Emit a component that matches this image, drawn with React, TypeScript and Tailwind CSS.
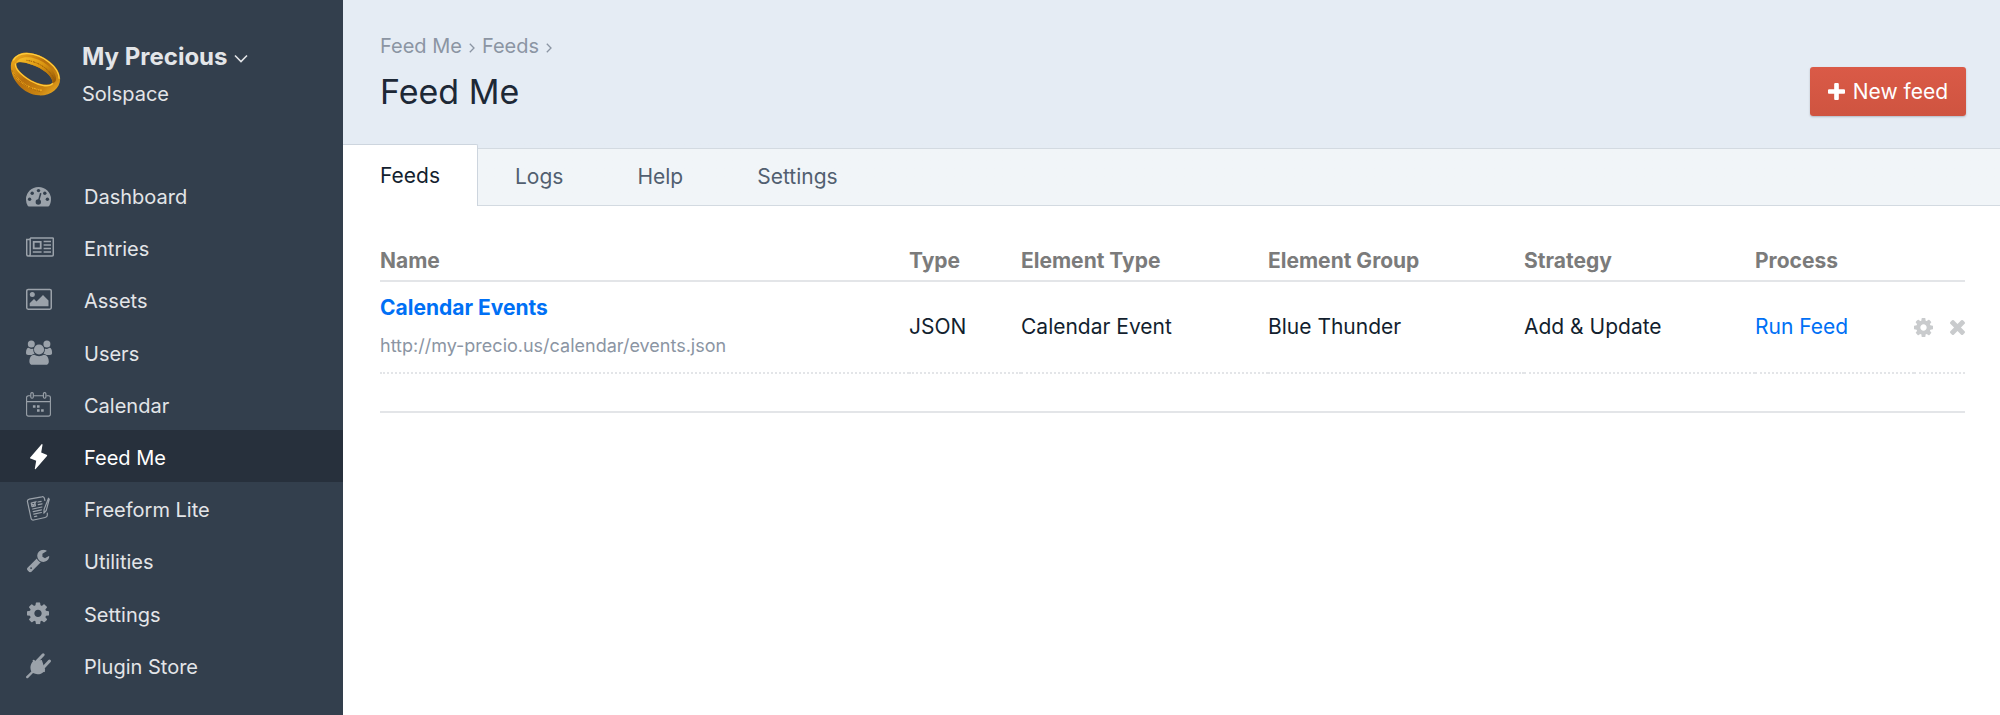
import type { ReactNode } from "react";

const COG =
  "M1152 896q0-106-75-181t-181-75-181 75-75 181 75 181 181 75 181-75 75-181zm512-109v222q0 12-8 23t-20 13l-185 28q-19 54-39 91 35 50 107 138 10 12 10 25t-9 23q-27 37-99 108t-94 71q-12 0-26-9l-138-108q-44 23-91 38-16 136-29 186-7 28-36 28h-222q-14 0-24.5-8.5t-11.5-21.5l-28-184q-49-16-90-37l-141 107q-10 9-25 9-14 0-25-11-126-114-165-168-7-10-7-23 0-12 8-23 15-21 51-66.5t54-70.5q-27-50-41-99l-183-27q-13-2-21-12.5t-8-23.5v-222q0-12 8-23t19-13l186-28q14-46 39-92-40-57-107-138-10-12-10-24 0-10 9-23 26-36 98.5-107.5t94.5-71.5q13 0 26 10l138 107q44-23 91-38 16-136 29-186 7-28 36-28h222q14 0 24.5 8.5t11.5 21.5l28 184q49 16 90 37l142-107q9-9 24-9 13 0 25 10 129 119 165 170 7 8 7 22 0 12-8 23-15 21-51 66.5t-54 70.5q26 50 41 98l183 28q13 2 21 12.5t8 23.5z";
const WRENCH =
  "M448 1472q0-26-19-45t-45-19-45 19-19 45 19 45 45 19 45-19 19-45zm644-420l-682 682q-37 37-90 37-52 0-91-37l-106-108q-38-36-38-90 0-53 38-91l681-681q39 98 114.5 173.5t173.5 114.5zm634-435q0 39-23 106-47 134-164.5 217.5t-258.5 83.5q-185 0-316.5-131.5t-131.5-316.5 131.5-316.5 316.5-131.5q58 0 121.5 16.5t107.5 46.5q16 11 16 28t-16 28l-293 169v224l193 107q5-3 79-48.5t135.5-81 70.5-35.5q15 0 23.5 10t8.5 25z";
const TIMES =
  "M1490 1322q0 40-28 68l-136 136q-28 28-68 28t-68-28l-294-294-294 294q-28 28-68 28t-68-28l-136-136q-28-28-28-68t28-68l294-294-294-294q-28-28-28-68t28-68l136-136q28-28 68-28t68 28l294 294 294-294q28-28 68-28t68 28l136 136q28 28 28 68t-28 68l-294 294 294 294q28 28 28 68z";
const PLUS =
  "M1600 736v192q0 40-28 68t-68 28h-416v416q0 40-28 68t-68 28h-192q-40 0-68-28t-28-68v-416h-416q-40 0-68-28t-28-68v-192q0-40 28-68t68-28h416v-416q0-40 28-68t68-28h192q40 0 68 28t28 68v416h416q40 0 68 28t28 68z";

const HOLE = "#333f4d";

const icons: Record<string, ReactNode> = {
  gauge: (
    <>
      <path d="M0 18.200a12.500 12.200 0 0 1 25 0c0 2.400-.6 4.600-1.700 6.500-.3.500-.7.800-1.200.8H2.900c-.5 0-.9-.3-1.200-.8A12.500 12.500 0 0 1 0 18.200z" />
      <g fill={HOLE}>
        <circle cx="3.6" cy="18.3" r="1.7" />
        <circle cx="6.2" cy="12.2" r="1.7" />
        <circle cx="12.5" cy="9.6" r="1.7" />
        <circle cx="18.8" cy="12.2" r="1.7" />
        <circle cx="21.4" cy="18.3" r="1.7" />
        <circle cx="12.3" cy="21" r="2.7" />
      </g>
      <path d="M12.400 20.500L14.600 12.800" stroke={HOLE} strokeWidth="1.5" strokeLinecap="round" />
    </>
  ),
  newspaper: (
    <g fill="none" stroke="currentColor" strokeWidth="1.5">
      <path d="M4.200 4.900h22.400c.4 0 .7.3.7.7v15.900c0 .9-.7 1.600-1.600 1.600H2.600c-1.100 0-1.900-.8-1.900-1.900V6.500h3.500M4.200 4.900v16.300c0 1.100-.8 1.900-1.700 1.900" />
      <path d="M7.700 8.900h7v6.400h-7z" strokeWidth="1.8" />
      <path d="M6.800 19h8.800M17.600 8.500h7.400M17.600 12h7.400M17.600 15.500h7.400M17.600 19h7.400" />
    </g>
  ),
  image: (
    <>
      <rect x=".75" y="4.45" width="24.5" height="19.8" rx="1.4" fill="none" stroke="currentColor" strokeWidth="1.5" />
      <circle cx="6.3" cy="9.6" r="2.5" />
      <path d="M3.700 21.300v-3l4.300-4.200 2.500 2.400 6.500-6.500 5.500 5.500v5.800z" />
    </>
  ),
  users: (
    <>
      <circle cx="5.3" cy="6" r="3.5" />
      <circle cx="20.9" cy="6" r="3.5" />
      <path d="M2.700 9.700c-1.800 0-2.700 2-2.700 5.300 0 1.300.8 2 2.100 2h3.500c.9-.8 1.900-1.200 3-1.300-1-1.300-1.500-2.900-1.300-4.900-1.700.4-3.200 0-4.600-1.100zM23.400 9.700c1.800 0 2.700 2 2.700 5.300 0 1.300-.8 2-2.100 2h-3.500c-.9-.8-1.900-1.200-3-1.300 1-1.300 1.500-2.900 1.300-4.900 1.700.4 3.200 0 4.600-1.100z" />
      <circle cx="13.05" cy="11.5" r="5.1" />
      <path d="M8.300 16.700c2.800 1.900 6.700 1.900 9.500 0 3.400.1 5 3.200 5 7 0 2-1.200 3.100-3.100 3.100H6.500c-1.900 0-3.100-1.100-3.100-3.100 0-3.800 1.500-6.900 4.900-7z" />
    </>
  ),
  calendar: (
    <>
      <g fill="none" stroke="currentColor" strokeWidth="1.1">
        <path d="M4.700 5.700H2.600C1.400 5.700.6 6.500.6 7.600v16.600c0 1.100.8 1.900 2 1.900h19.800c1.200 0 2-.8 2-1.900V7.600c0-1.100-.8-1.900-2-1.900h-2M7.500 5.700h9.700M.6 11.600h23.800" />
        <rect x="4.8" y="2.6" width="2.5" height="5.6" rx="1.2" />
        <rect x="17.4" y="2.6" width="2.5" height="5.6" rx="1.2" />
      </g>
      <path d="M6.900 15.300h2.600v2.400H6.900zM11 15.300h2.600v2.400H11zM11 19.300h2.600v2.400H11zM15.100 19.300h2.600v2.400h-2.600z" />
    </>
  ),
  bolt: <path d="M15.600 2.300L4.200 15.400c-.4.500-.2 1 .4 1.200l5.600 2.100-1.400 8.100c0 .5.500.6.900.2L21 13.900c.4-.5.200-.9-.4-1.200L15.200 10.600l1.300-7.700c.1-.7-.4-1.100-.9-.6z" />,
  form: (
    <g fill="none" stroke="currentColor" strokeWidth="1.2" strokeLinecap="round" strokeLinejoin="round">
      <path d="M18.900 6.500l-.5-2.100c-.3-1.300-1.300-1.900-2.600-1.600L3.300 5.200C1.900 5.500 1.200 6.500 1.500 7.900l3.600 16.400c.3 1.400 1.300 2 2.600 1.700l11.400-2.500c1.300-.3 2.200-1 2.200-2.300v-2" />
      <path d="M22.500 4.200l-4.400 11.200-.2 3.700 2.300-2.600L23.300 5M5.200 9l3.500-.8.8 3.600-3.500.8zM6.400 10.300l1.200 1 2.400-3.800M12 8l3.200-.7M12.300 10.600l3.800-.8M6.700 15l9.200-2M7.200 17.600l8.300-1.800M7.800 20.200l7.600-1.700M8.600 22.600l2.200-.5" />
    </g>
  ),
  wrench: (
    <svg x="1" y="3.5" width="22.5" height="23" viewBox="84 128 1650 1650">
      <path d={WRENCH} />
    </svg>
  ),
  cog: (
    <svg x="1" y="3.3" width="22" height="22" viewBox="128 128 1536 1536">
      <path d={COG} />
    </svg>
  ),
  plug: (
    <>
      <path d="M15.800 9.100L7.300 9.900C4.200 13 3.700 17.200 5.300 20.400L.4 25.200c-.6.600-.6 1.200 0 1.700.5.500 1.200.5 1.700 0l4.900-4.800c3.700 2 8.100 1.400 11-1.700l1.200-1.300z" />
      <path d="M7.600 9.700L18 20.100" stroke="currentColor" strokeWidth="2" strokeLinecap="round" />
      <path d="M11.200 10L17.200 3.800M17.700 16.200L23.500 10" stroke="currentColor" strokeWidth="3" strokeLinecap="round" />
    </>
  ),
};

const nav = [
  { label: "Dashboard", icon: "gauge" },
  { label: "Entries", icon: "newspaper" },
  { label: "Assets", icon: "image" },
  { label: "Users", icon: "users" },
  { label: "Calendar", icon: "calendar" },
  { label: "Feed Me", icon: "bolt", active: true },
  { label: "Freeform Lite", icon: "form" },
  { label: "Utilities", icon: "wrench" },
  { label: "Settings", icon: "cog" },
  { label: "Plugin Store", icon: "plug" },
];

function RingLogo() {
  return (
    <svg viewBox="30 64 158 138" className="h-[46px] w-[53px] shrink-0" aria-hidden="true">
      <defs>
        <linearGradient id="band" x1="0" y1="0" x2="1" y2="1">
          <stop offset="0" stopColor="#f6b41f" />
          <stop offset=".45" stopColor="#b86f0c" />
          <stop offset=".75" stopColor="#c98310" />
          <stop offset="1" stopColor="#f2b62c" />
        </linearGradient>
        <linearGradient id="inner" x1="0" y1="0" x2="1" y2="1">
          <stop offset="0" stopColor="#f9c22c" />
          <stop offset=".5" stopColor="#d8930f" />
          <stop offset="1" stopColor="#8f5408" />
        </linearGradient>
      </defs>
      <path fill="url(#band)" fillRule="evenodd" d="M35 108C36 84 60 67 86 69c48 3 97 42 97 78 0 30-30 52-64 50-46-3-85-47-84-89zM51 103c0 16 22 35 46 49 24 13 50 17 63 8 2-14-18-36-50-50-29-12-54-16-59-7z" />
      <path fill="url(#inner)" d="M51 100c4-12 20-19 38-17 40 4 80 36 82 64 0 6-3 11-11 13 2-14-18-36-50-50-29-12-54-16-59-10z" />
      <path fill="none" stroke="#ffce3d" strokeWidth="4" d="M42 92c8-13 25-21 44-20 46 3 93 40 94 75" />
      <path fill="none" stroke="#ffc837" strokeWidth="4" d="M49 101c-3 17 20 37 46 53 25 14 54 20 66 7" />
      <path fill="none" stroke="#f0a91c" strokeWidth="5" strokeDasharray="3 2 6 3 2 3" d="M41 128c16 28 50 51 90 54" />
      <path fill="none" stroke="#8a4f06" strokeWidth="2" strokeDasharray="4 4 2 3" d="M38 122c14 29 48 56 88 64" />
      <path fill="none" stroke="#9a5a08" strokeWidth="3" strokeDasharray="3 3 6 2" d="M82 92c36 4 70 27 84 58" />
    </svg>
  );
}

function Sidebar() {
  return (
    <aside className="w-[343px] shrink-0 bg-[#333f4d] text-[#e3e5e8]">
      <div className="flex h-[169px] items-start gap-5 pl-[9px] pt-[41px]">
        <div className="pt-[10px]">
          <RingLogo />
        </div>
        <div>
          <button type="button" className="flex items-center gap-[6px] text-[24px] leading-8 font-bold">
            My Precious
            <svg viewBox="0 0 14 10" className="mt-1 h-[10px] w-[14px]" fill="none" stroke="currentColor" strokeWidth="1.6" aria-hidden="true">
              <path d="M1 1.500l6 6 6-6" />
            </svg>
          </button>
          <p className="mt-[5px] leading-8">Solspace</p>
        </div>
      </div>
      <nav aria-label="Main">
        <ul className="grid h-[522px] auto-rows-fr">
          {nav.map((item) => (
            <li key={item.label}>
              <a
                href="#"
                aria-current={item.active ? "page" : undefined}
                className={
                  item.active
                    ? "flex h-full items-center gap-[30px] bg-[#27303c] pl-[26px] text-white"
                    : "flex h-full items-center gap-[30px] pl-[26px]"
                }
              >
                <svg
                  viewBox="0 0 28 28"
                  className={item.active ? "size-7 shrink-0 text-white" : "size-7 shrink-0 text-[#9ba2aa]"}
                  fill="currentColor"
                  aria-hidden="true"
                >
                  {icons[item.icon]}
                </svg>
                <span className="pt-1">{item.label}</span>
              </a>
            </li>
          ))}
        </ul>
      </nav>
    </aside>
  );
}

function Chevron() {
  return (
    <svg viewBox="0 0 6 10" className="mt-1 h-[10px] w-[6px]" fill="none" stroke="currentColor" strokeWidth="1.3" aria-hidden="true">
      <path d="M.8.700L5 5 .8 9.300" />
    </svg>
  );
}

const tabClass = "flex h-[56px] items-center px-[37px] text-[#515f70]";
const columns = ["Name", "Type", "Element Type", "Element Group", "Strategy", "Process"];

export default function App() {
  return (
    <div className="flex min-h-screen bg-white font-['Inter','Liberation_Sans',sans-serif] text-[20px] text-[#131f2f]">
      <Sidebar />
      <div className="min-w-0 flex-1">
        <header className="bg-[#e5ecf4]">
          <div className="flex items-start justify-between pr-[34px] pl-[37px]">
            <div className="pt-8">
              <nav aria-label="Breadcrumb" className="flex items-center gap-[7px] leading-7 text-[#8b95a3]">
                <a href="#">Feed Me</a>
                <Chevron />
                <a href="#">Feeds</a>
                <Chevron />
              </nav>
              <h1 className="mt-2 text-[34px] leading-[48px] text-[#1d2836]">Feed Me</h1>
            </div>
            <button
              type="button"
              className="mt-[67px] flex h-[49px] items-center gap-2 rounded-[3px] bg-linear-to-b from-[#da5a47] to-[#cf5440] px-[18px] text-[21px] text-white shadow-[0_1px_2px_rgba(31,41,55,0.25)]"
            >
              <svg viewBox="192 128 1408 1408" className="size-[17px]" fill="currentColor" aria-hidden="true">
                <path d={PLUS} />
              </svg>
              New feed
            </button>
          </div>
          <nav aria-label="Sections" className="mt-7 flex items-end bg-linear-to-b from-[#e5ecf4] from-[4px] to-[#f1f5f8] to-[4px] text-[21px]">
            <a href="#" aria-current="page" className="flex h-[62px] items-center rounded-tr-[2px] border-t border-r border-[#cdd5de] bg-white px-[37px]">
              Feeds
            </a>
            <div className="flex flex-1 border-y border-[#d3dae1]">
              <a href="#" className={tabClass}>Logs</a>
              <a href="#" className={tabClass}>Help</a>
              <a href="#" className={tabClass}>Settings</a>
            </div>
          </nav>
        </header>
        <main className="pt-9 pr-[35px] pl-[37px]">
          <div className="border-b-2 border-[#e3e5e8] pb-[37px]">
            <table className="w-full table-fixed text-left text-[21px]">
              <colgroup>
                <col />
                <col className="w-[112px]" />
                <col className="w-[247px]" />
                <col className="w-[256px]" />
                <col className="w-[231px]" />
                <col className="w-[159px]" />
                <col className="w-[51px]" />
              </colgroup>
              <thead>
                <tr className="border-b-2 border-[#e3e5e8] text-[#7b7b7b]">
                  {columns.map((c) => (
                    <th key={c} scope="col" className="h-[39px] p-0 font-bold">
                      {c}
                    </th>
                  ))}
                  <td />
                </tr>
              </thead>
              <tbody>
                <tr className="border-b-2 border-dotted border-[#e3e5e8]">
                  <td className="h-[92px] p-0">
                    <a href="#" className="block leading-7 font-bold text-[#0070f5]">Calendar Events</a>
                    <span className="mt-3 mb-[2px] block text-[18px] leading-6 text-[#8b95a3]">http://my-precio.us/calendar/events.json</span>
                  </td>
                  <td className="p-0">JSON</td>
                  <td className="p-0">Calendar Event</td>
                  <td className="p-0">Blue Thunder</td>
                  <td className="p-0">Add &amp; Update</td>
                  <td className="p-0">
                    <a href="#" className="text-[#0070f5]">Run Feed</a>
                  </td>
                  <td className="p-0">
                    <div className="flex items-center justify-between text-[#c9cbcd]">
                      <button type="button" aria-label="Feed settings">
                        <svg viewBox="128 128 1536 1536" className="size-[19px]" fill="currentColor" aria-hidden="true">
                          <path d={COG} />
                        </svg>
                      </button>
                      <button type="button" aria-label="Delete feed">
                        <svg viewBox="302 366 1188 1188" className="size-[15px]" fill="currentColor" aria-hidden="true">
                          <path d={TIMES} />
                        </svg>
                      </button>
                    </div>
                  </td>
                </tr>
              </tbody>
            </table>
          </div>
        </main>
      </div>
    </div>
  );
}
